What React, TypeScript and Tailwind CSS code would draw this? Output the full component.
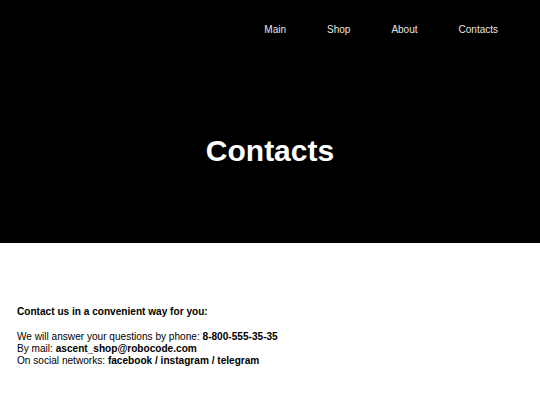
const links = ['Main', 'Shop', 'About', 'Contacts'];

export default function App() {
  return (
    <div className="min-h-[405px] bg-white font-['Liberation_Sans',Arial,sans-serif] text-black">
      <header className="flex h-[243px] flex-col bg-black">
        <nav className="flex justify-end gap-[41px] pr-[42px] pt-[23px]">
          {links.map((l) => (
            <a key={l} href="#" className="text-[10px] leading-[14px] text-[#e6e6e6]">
              {l}
            </a>
          ))}
        </nav>
        <div className="flex flex-1 items-center justify-center pt-[22px]">
          <h1 className="text-[30px] font-bold leading-none text-white">Contacts</h1>
        </div>
      </header>

      <section className="px-[17px] pt-[63px] text-[10.1px] leading-[12px]">
        <p className="font-bold">Contact us in a convenient way for you:</p>
        <div className="mt-[13px]">
          <p>
            We will answer your questions by phone: <b>8-800-555-35-35</b>
          </p>
          <p>
            By mail: <b>ascent_shop@robocode.com</b>
          </p>
          <p>
            On social networks: <b>facebook / instagram / telegram</b>
          </p>
        </div>
      </section>
    </div>
  );
}
